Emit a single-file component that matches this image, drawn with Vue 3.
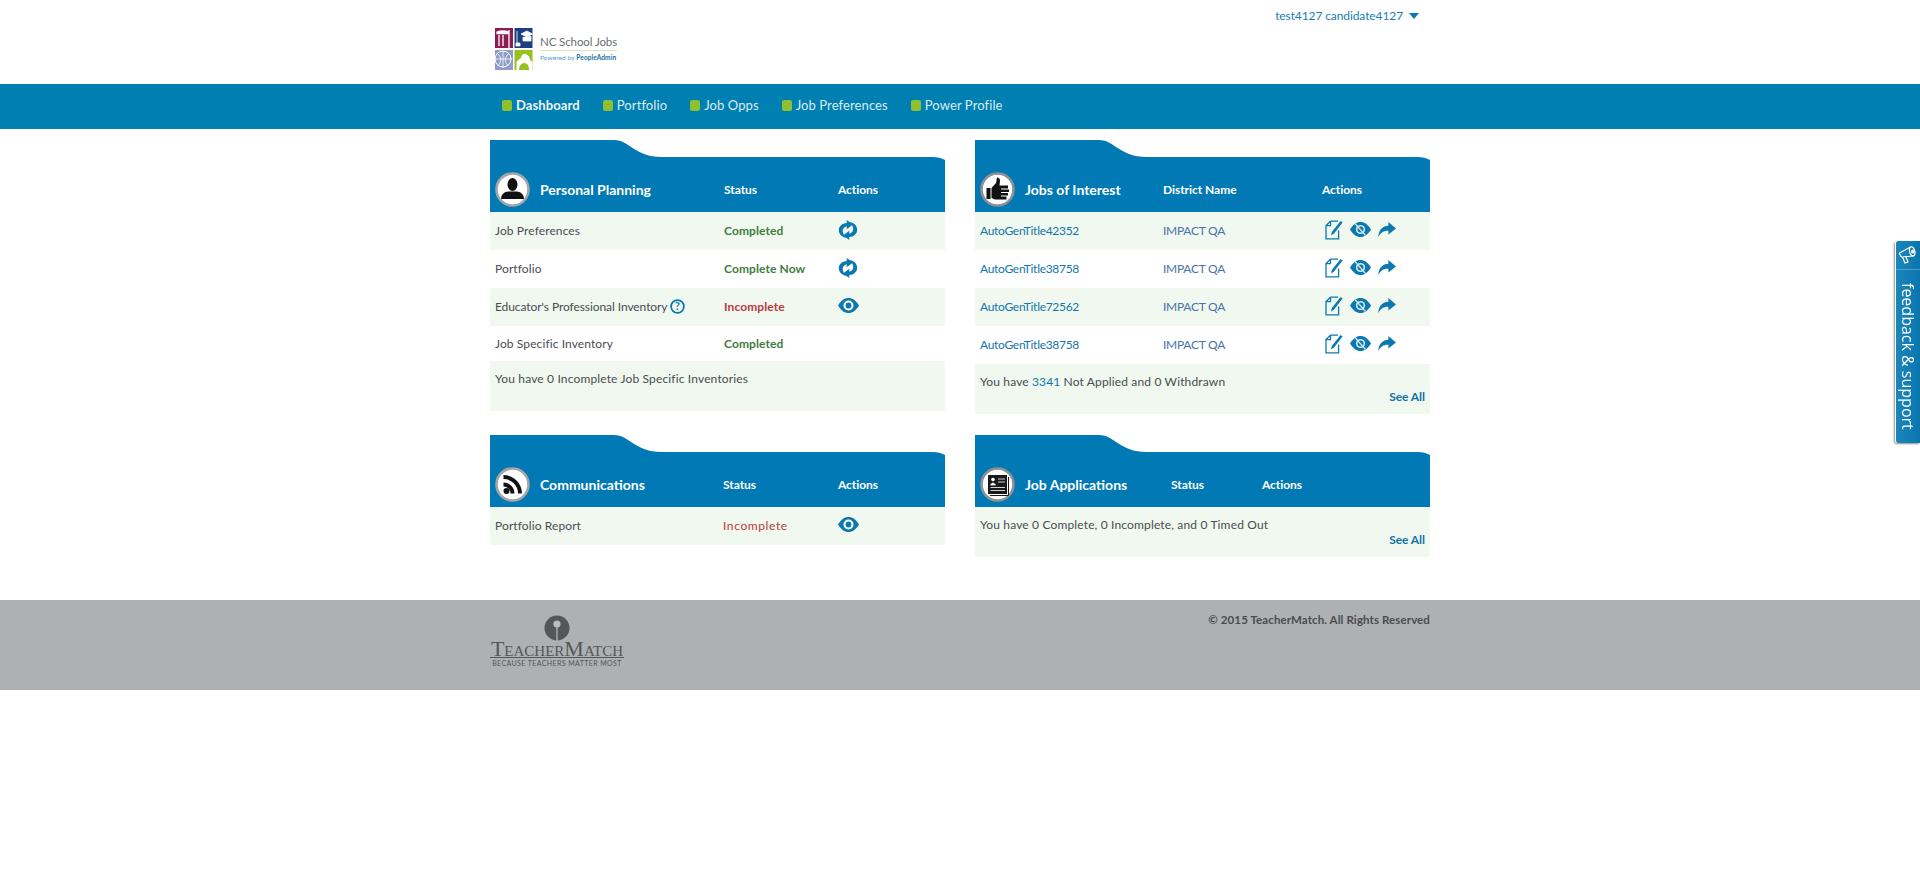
<template>
  <div class="page">
    <svg class="sprite" aria-hidden="true">
      <symbol id="i-refresh" viewBox="0 0 24 24">
        <path d="M10.500 0 L18 5.500 L10.500 11 V7.500 C6.500 8.500 5 12 6 15 C6.600 17.500 8 19.500 10 21.500 C4 20.500 1 16.500 1 12 C1 7.500 5 3.800 10.500 3.500 Z" />
        <path transform="rotate(180 12 12)" d="M10.500 0 L18 5.500 L10.500 11 V7.500 C6.500 8.500 5 12 6 15 C6.600 17.500 8 19.500 10 21.500 C4 20.500 1 16.500 1 12 C1 7.500 5 3.800 10.500 3.500 Z" />
      </symbol>
      <symbol id="i-eye" viewBox="0 0 21 15">
        <path d="M0 7.500 C3 2.400 6.500 0 10.500 0 S18 2.400 21 7.500 C18 12.600 14.500 15 10.500 15 S3 12.600 0 7.500 Z" />
        <circle cx="10.500" cy="7.500" r="5" fill="#fff" />
        <circle cx="10.500" cy="7.500" r="2.900" />
      </symbol>
      <symbol id="i-eye-off" viewBox="0 0 21 15">
        <path d="M0 7.500 C3 2.400 6.500 0 10.500 0 S18 2.400 21 7.500 C18 12.600 14.500 15 10.500 15 S3 12.600 0 7.500 Z" />
        <circle cx="10.500" cy="7.500" r="4.600" fill="#d6e9f0" />
        <circle cx="10.500" cy="7.500" r="3" />
        <path d="M5 1.500 L15.500 13.500" stroke="#d6e9f0" stroke-width="1.200" />
      </symbol>
      <symbol id="i-edit" viewBox="0 0 18 20">
        <path d="M5.500 1.200 H13 M5.500 1.200 L1 5.600 V18.800 H13.600 V10.500 M1 5.600 H5.500 V1.200" fill="none" stroke="currentColor" stroke-width="1.300" />
        <path d="M15.600 1 L17.600 2.600 L9 13.600 L6 15.400 L6.800 12 Z" />
      </symbol>
      <symbol id="i-share" viewBox="0 0 18 15">
        <path d="M10.400 0 L18 6.400 L10.400 12.600 V8.800 C5.600 8.600 2.600 10.600 0.400 15 C0.400 9 3.600 4.200 10.400 3.800 Z" />
      </symbol>
    </svg>

    <header class="top">
      <div class="top-inner">
        <div class="logo">
          <svg class="logo-mark" width="38" height="42" viewBox="0 0 38 42">
            <rect x="0" y="0" width="18" height="20" fill="#8d1c55" />
            <path d="M2 4 Q8 2 14 4 V5.500 H2 Z M4 7 V18 M8 7 V18 M14 2 V20" fill="#fff" stroke="#fff" stroke-width="1.300" />
            <rect x="19.500" y="0" width="18" height="20" fill="#1c3f80" />
            <path d="M26 6 L32 3 L37.500 6 L32 9 Z M28 9 V13 H36 V8 M22 3 V15 M21 15 H25 V18 H21 Z" fill="#fff" stroke="#fff" stroke-width=".8" />
            <rect x="0" y="22" width="18" height="20" fill="#8f9cc9" />
            <circle cx="8" cy="31" r="8" fill="none" stroke="#fff" stroke-width="1" />
            <path d="M0 31 H17 M8 23 V40 M2 25 Q9 31 3 38 M14 25 Q7 31 13 38" fill="none" stroke="#fff" stroke-width=".8" />
            <rect x="19.500" y="22" width="18" height="20" fill="#97c11f" />
            <path d="M21.500 42 V34 Q24 31 26 30 Q27 25 31 26 Q35 28 35 32 L37.500 34 V42 H34 Q34 35 29 35 Q24 36 24 42 Z" fill="#fff" />
          </svg>
          <div class="logo-text">
            <div class="logo-name">NC School Jobs</div>
            <div class="logo-sub">Powered by <b>PeopleAdmin</b></div>
          </div>
        </div>
        <div class="user">
          <span>test4127 candidate4127</span>
          <i class="caret"></i>
        </div>
      </div>
    </header>

    <nav class="nav">
      <div class="nav-inner">
        <a v-for="item in navItems" :key="item" class="nav-item" :class="{ active: item === 'Dashboard' }">
          <i class="dot"></i>{{ item }}
        </a>
      </div>
    </nav>

    <main class="main">
      <section class="panel">
        <div class="panel-head cols-a">
          <div class="head-title">
            <svg class="avatar" viewBox="0 0 35 35">
              <circle cx="17.500" cy="17.500" r="16" fill="#fff" stroke="#a3a5a7" stroke-width="2.600" />
              <ellipse cx="17.500" cy="12.500" rx="5" ry="6.500" fill="#111" />
              <path d="M6 27 Q6 20.500 13 19.500 L22 19.500 Q29 20.500 29 27 Z" fill="#111" />
            </svg>
            <span>Personal Planning</span>
          </div>
          <div class="head-label">Status</div>
          <div class="head-label">Actions</div>
        </div>
        <div class="row cols-a shade">
          <div>Job Preferences</div>
          <div class="good">Completed</div>
          <div><svg class="ico refresh"><use href="#i-refresh" /></svg></div>
        </div>
        <div class="row cols-a">
          <div>Portfolio</div>
          <div class="good">Complete Now</div>
          <div><svg class="ico refresh"><use href="#i-refresh" /></svg></div>
        </div>
        <div class="row cols-a shade">
          <div class="with-help">
            Educator's Professional Inventory
            <svg class="help" viewBox="0 0 15 15">
              <circle cx="7.500" cy="7.500" r="6.400" fill="none" stroke="currentColor" stroke-width="1.800" />
              <text x="7.500" y="11.200" text-anchor="middle" class="help-q">?</text>
            </svg>
          </div>
          <div class="bad">Incomplete</div>
          <div><svg class="ico eye"><use href="#i-eye" /></svg></div>
        </div>
        <div class="row cols-a short">
          <div>Job Specific Inventory</div>
          <div class="good">Completed</div>
          <div></div>
        </div>
        <div class="summary shade tall">You have 0 Incomplete Job Specific Inventories</div>
      </section>

      <section class="panel">
        <div class="panel-head cols-c">
          <div class="head-title">
            <svg class="avatar" viewBox="0 0 35 35">
              <circle cx="17.500" cy="17.500" r="16" fill="#fff" stroke="#8e9092" stroke-width="2.600" />
              <path d="M6.500 16 H10.500 V27 H6.500 Z M11.500 16 L16 11 L17 5.500 Q20 5.500 20 9 L19.500 13.500 H28 V16.500 H21 V17.500 H29 V20 H21 V21 H28 V23.500 H21 V24.500 H26.500 V27.500 H15 L11.500 26 Z" fill="#111" />
            </svg>
            <span>Jobs of Interest</span>
          </div>
          <div class="head-label">District Name</div>
          <div class="head-label">Actions</div>
        </div>
        <div v-for="(job, i) in jobs" :key="i" class="row cols-c" :class="{ shade: i % 2 === 0 }">
          <div class="link">{{ job }}</div>
          <div class="district">IMPACT QA</div>
          <div class="job-actions">
            <svg class="ico edit"><use href="#i-edit" /></svg>
            <svg class="ico eye"><use href="#i-eye-off" /></svg>
            <svg class="ico share"><use href="#i-share" /></svg>
          </div>
        </div>
        <div class="summary shade tall">
          You have <span class="link count">3341</span> Not Applied and 0 Withdrawn
          <div class="see-all">See All</div>
        </div>
      </section>

      <section class="panel">
        <div class="panel-head cols-b">
          <div class="head-title">
            <svg class="avatar" viewBox="0 0 35 35">
              <circle cx="17.500" cy="17.500" r="16" fill="#fff" stroke="#a3a5a7" stroke-width="2.600" />
              <circle cx="11.500" cy="24" r="3" fill="#111" />
              <path d="M8.500 15.500 A11 11 0 0 1 19.500 26.500 H15.500 A7 7 0 0 0 8.500 19.500 Z" fill="#111" />
              <path d="M8.500 8 A18.500 18.500 0 0 1 27 26.500 H23 A14.500 14.500 0 0 0 8.500 12 Z" fill="#111" />
            </svg>
            <span>Communications</span>
          </div>
          <div class="head-label">Status</div>
          <div class="head-label">Actions</div>
        </div>
        <div class="row cols-b shade">
          <div>Portfolio Report</div>
          <div class="bad plain">Incomplete</div>
          <div><svg class="ico eye"><use href="#i-eye" /></svg></div>
        </div>
      </section>

      <section class="panel">
        <div class="panel-head cols-d">
          <div class="head-title">
            <svg class="avatar" viewBox="0 0 35 35">
              <circle cx="17.500" cy="17.500" r="16" fill="#fff" stroke="#8e9092" stroke-width="2.600" />
              <rect x="8" y="8" width="19" height="19" fill="#1a1a1a" />
              <path d="M28.500 10 V28.500 H10" fill="none" stroke="#1a1a1a" stroke-width="1" />
              <circle cx="13" cy="12.500" r="1.800" fill="#fff" />
              <path d="M10.500 18 Q13 14 15.500 18 Z M18 12 H25 M18 15 H25 M10.500 20.500 H25 M10.500 23.500 H25" fill="#fff" stroke="#fff" stroke-width=".8" />
            </svg>
            <span>Job Applications</span>
          </div>
          <div class="head-label">Status</div>
          <div class="head-label">Actions</div>
        </div>
        <div class="summary shade">
          You have 0 Complete, 0 Incomplete, and 0 Timed Out
          <div class="see-all">See All</div>
        </div>
      </section>
    </main>

    <footer class="footer">
      <div class="footer-inner">
        <div class="tm">
          <svg class="tm-mark" width="26" height="26" viewBox="0 0 26 26">
            <circle cx="13" cy="13" r="12.500" fill="#55565a" />
            <circle cx="13" cy="9" r="3.600" fill="#b9bcbe" />
            <path d="M13 11 V26" stroke="#b9bcbe" stroke-width="1.200" />
          </svg>
          <div class="tm-name">TeacherMatch</div>
          <div class="tm-tag">BECAUSE TEACHERS MATTER MOST</div>
        </div>
        <div class="copy">© 2015 TeacherMatch. All Rights Reserved</div>
      </div>
    </footer>

    <aside class="feedback">
      <div class="feedback-icon">
        <svg width="20" height="20" viewBox="0 0 20 20" fill="none" stroke="#fff" stroke-width="1.200">
          <path d="M1.500 8 L12.500 2 Q15 1 16.500 5 Q18 9.500 15.500 11 L4 12 Q2 11.500 1.500 8 Z" />
          <path d="M12.500 2 Q10.500 4 12 8 Q13 11 15.500 11 M4.500 12 L7 18 L10 17 L8 12" />
          <circle cx="15" cy="6.500" r="1.400" fill="#fff" />
        </svg>
      </div>
      <div class="feedback-text">feedback &amp; support</div>
    </aside>
  </div>
</template>

<script setup>
const navItems = ["Dashboard", "Portfolio", "Job Opps", "Job Preferences", "Power Profile"];
const jobs = ["AutoGenTitle42352", "AutoGenTitle38758", "AutoGenTitle72562", "AutoGenTitle38758"];
</script>

<style scoped>
.page {
  font-family: Lato, "Liberation Sans", sans-serif;
  font-size: 12px;
  letter-spacing: 0.1px;
  color: #4a4c52;
  background: #fff;
}

.sprite {
  position: absolute;
  width: 0;
  height: 0;
}

.top-inner,
.nav-inner,
.footer-inner {
  width: 940px;
  margin: 0 auto;
}

.top-inner {
  height: 84px;
  display: flex;
  justify-content: space-between;
  align-items: flex-start;
}

.logo {
  display: flex;
  padding: 28px 0 0 5px;
  gap: 7px;
}

.logo-text {
  width: 77px;
  padding-top: 6px;
}

.logo-name {
  font-size: 11.500px;
  letter-spacing: -0.1px;
  line-height: 15px;
  color: #6b6e72;
  padding-bottom: 1px;
  border-bottom: 1px solid #d5e8bd;
  white-space: nowrap;
}

.logo-sub {
  font-size: 6.500px;
  letter-spacing: 0.1px;
  line-height: 10px;
  margin-top: 2px;
  color: #4d9dc5;
  white-space: nowrap;
}

.logo-sub b {
  color: #1a6f9f;
}

.user {
  display: flex;
  align-items: center;
  gap: 6px;
  padding: 8px 11px 0 0;
  line-height: 15px;
  letter-spacing: -0.1px;
  color: #227db3;
}

.caret {
  width: 0;
  height: 0;
  border-left: 5px solid transparent;
  border-right: 5px solid transparent;
  border-top: 6px solid #0d79b1;
}

.nav {
  height: 45px;
  background: #007fb2;
}

.nav-inner {
  height: 45px;
  display: flex;
  align-items: center;
  gap: 23px;
  padding: 0 0 3px 12px;
  box-sizing: border-box;
}

.nav-item {
  display: flex;
  align-items: center;
  gap: 4px;
  font-size: 13px;
  letter-spacing: 0.1px;
  color: #dcebf0;
}

.nav-item.active {
  font-weight: 700;
  color: #eef5f6;
}

.dot {
  width: 10px;
  height: 11px;
  border-radius: 2px;
  background: #90c02f;
}

.main {
  width: 940px;
  margin: 0 auto;
  padding: 11px 0 43px;
  display: grid;
  grid-template-columns: 455px 455px;
  grid-template-rows: 274px auto;
  column-gap: 30px;
  row-gap: 21px;
  align-items: start;
}

.panel-head {
  height: 72px;
  box-sizing: border-box;
  padding: 32px 0 5px 5px;
  background: #0079b5;
  clip-path: path("M0 0 H124 C140 0 144 17 172 17 H442 Q450 17 455 20 V72 H0 Z");
  color: #fff;
  align-items: center;
}

.panel-head,
.row {
  display: grid;
}

.cols-a {
  grid-template-columns: 229px 114px 1fr;
}

.cols-b {
  grid-template-columns: 228px 115px 1fr;
}

.cols-c {
  grid-template-columns: 183px 159px 1fr;
}

.cols-d {
  grid-template-columns: 191px 91px 1fr;
}

.head-title {
  display: flex;
  align-items: center;
  gap: 10px;
  font-size: 14px;
  font-weight: 700;
  letter-spacing: 0;
  white-space: nowrap;
}

.avatar {
  width: 35px;
  height: 35px;
  flex: none;
}

.head-label {
  font-size: 12px;
  font-weight: 700;
  letter-spacing: -0.05px;
}

.row {
  height: 38px;
  box-sizing: border-box;
  padding: 0 0 2px 5px;
  align-items: center;
}

.row.short {
  height: 35px;
  padding-bottom: 1px;
}

.shade {
  background: #f0f8ef;
}

.good {
  font-weight: 700;
  color: #3f7d3e;
}

.bad {
  font-weight: 700;
  color: #b93a40;
}

.bad.plain {
  font-weight: 400;
  letter-spacing: 0.6px;
}

.with-help {
  display: flex;
  align-items: center;
  gap: 3px;
  letter-spacing: -0.08px;
  white-space: nowrap;
}

.help {
  width: 15px;
  height: 15px;
  color: #0b79b0;
}

.help-q {
  font-size: 10.500px;
  font-weight: 700;
  fill: #0b79b0;
  letter-spacing: 0;
}

.ico {
  display: block;
  fill: #0b79b0;
  color: #0b79b0;
}

.ico.refresh {
  width: 20px;
  height: 20px;
  margin-top: -1px;
}

.ico.eye {
  width: 21px;
  height: 15px;
  margin-top: -2px;
}

.ico.edit {
  width: 18px;
  height: 20px;
}

.ico.share {
  width: 18px;
  height: 15px;
}

.job-actions {
  display: flex;
  align-items: center;
  gap: 7px;
  padding-left: 3px;
  margin-top: -1px;
}

.job-actions .ico.eye {
  margin-top: 0;
}

.link {
  letter-spacing: -0.3px;
  color: #1476ab;
}

.link.count {
  letter-spacing: 0.1px;
}

.district {
  letter-spacing: -0.25px;
  color: #4a72a8;
}

.summary {
  box-sizing: border-box;
  height: 50px;
  padding: 11px 5px 0;
  line-height: 14px;
  letter-spacing: 0.15px;
}

.see-all {
  margin-top: 1px;
  text-align: right;
  font-weight: 700;
  letter-spacing: -0.05px;
  color: #1073a8;
}

.footer {
  height: 90px;
  background: #adb1b3;
}

.footer-inner {
  display: flex;
  justify-content: space-between;
  align-items: flex-start;
}

.tm {
  width: 134px;
  padding-top: 15px;
  display: flex;
  flex-direction: column;
  align-items: center;
  color: #55565a;
}

.tm-mark {
  display: block;
  margin-left: -1px;
}

.tm-name {
  width: 100%;
  font-family: "Liberation Serif", serif;
  font-variant: small-caps;
  font-size: 22px;
  line-height: 16px;
  letter-spacing: 0;
  text-align: center;
  border-bottom: 1px solid #55565a;
  white-space: nowrap;
}

.tm-tag {
  width: 100%;
  font-size: 7px;
  letter-spacing: 0.4px;
  line-height: 10px;
  text-align: center;
  white-space: nowrap;
}

.copy {
  padding-top: 12px;
  font-size: 11.500px;
  font-weight: 700;
  letter-spacing: 0.1px;
  line-height: 15px;
  color: #4a4b4f;
}

.feedback {
  position: fixed;
  top: 241px;
  right: 0;
  width: 24px;
  height: 202px;
  background: linear-gradient(90deg, #1a86bb, #0a76ae);
  border-left: 1px solid #fff;
  border-radius: 3px 0 0 3px;
  box-shadow: -1px 1px 2px rgba(0, 0, 0, 0.45);
  color: #fff;
}

.feedback-icon {
  height: 28px;
  display: flex;
  align-items: center;
  justify-content: center;
  border-bottom: 1px solid #4d9fc8;
}

.feedback-text {
  writing-mode: vertical-rl;
  font-family: "Open Sans", sans-serif;
  font-size: 16px;
  letter-spacing: 0;
  line-height: 24px;
  padding-top: 13px;
  white-space: nowrap;
}
</style>

<style>
body {
  background: #fff;
}
</style>
